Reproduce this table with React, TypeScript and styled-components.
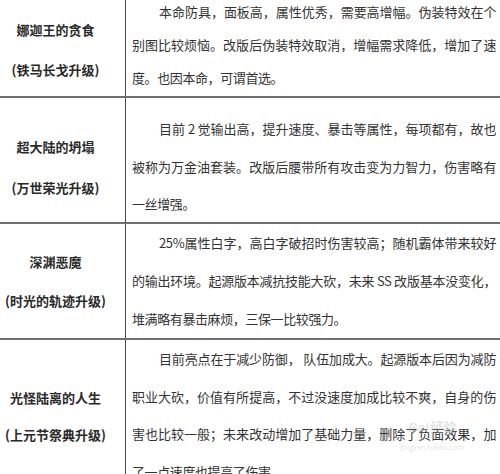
import styled, { createGlobalStyle } from 'styled-components';

const GlobalStyle = createGlobalStyle`
  html, body {
    margin: 0;
    padding: 0;
    background: #fff;
  }
  body {
    width: 500px;
    height: 474px;
    overflow: hidden;
    font-family: "Noto Sans CJK SC", "Noto Sans", sans-serif;
    color: #333;
  }
`;

type Row = {
  height: number;
  titleTop: number;
  titleGap: number;
  title: string;
  sub: string;
  bodyTop: number;
  lineHeight: number;
  lines: string[];
};

const rows: Row[] = [
  {
    height: 110,
    titleTop: 22,
    titleGap: 40,
    title: '娜迦王的贪食',
    sub: '(铁马长戈升级)',
    bodyTop: 7,
    lineHeight: 33,
    lines: [
      '本命防具，面板高，属性优秀，需要高增幅。伪装特效在个',
      '别图比较烦恼。改版后伪装特效取消，增幅需求降低，增加了速',
      '度。也因本命，可谓首选。',
    ],
  },
  {
    height: 126,
    titleTop: 28,
    titleGap: 41,
    title: '超大陆的坍塌',
    sub: '(万世荣光升级)',
    bodyTop: 12,
    lineHeight: 37.5,
    lines: [
      '目前 2 觉输出高，提升速度、暴击等属性，每项都有，故也',
      '被称为万金油套装。改版后腰带所有攻击变为力智力，伤害略有',
      '一丝增强。',
    ],
  },
  {
    height: 116,
    titleTop: 18,
    titleGap: 39,
    title: '深渊恶魔',
    sub: '(时光的轨迹升级)',
    bodyTop: 0,
    lineHeight: 38,
    lines: [
      '25%属性白字，高白字破招时伤害较高；随机霸体带来较好',
      '的输出环境。起源版本减抗技能大砍，未来 SS 改版基本没变化，',
      '堆满略有暴击麻烦，三保一比较强力。',
    ],
  },
  {
    height: 150,
    titleTop: 39,
    titleGap: 37,
    title: '光怪陆离的人生',
    sub: '(上元节祭典升级)',
    bodyTop: 0,
    lineHeight: 37.5,
    lines: [
      '目前亮点在于减少防御， 队伍加成大。起源版本后因为减防',
      '职业大砍，价值有所提高，不过没速度加成比较不爽，自身的伤',
      '害也比较一般；未来改动增加了基础力量，删除了负面效果，加',
      '了一点速度也提高了伤害。',
    ],
  },
];

function App() {
  return (
    <Page>
      <GlobalStyle />
      <Table>
        {rows.map((row) => (
          <TableRow key={row.title} $height={row.height}>
            <NameCell $top={row.titleTop}>
              <Title $lh={row.titleGap}>{row.title}</Title>
              <Title $lh={row.titleGap}>{row.sub}</Title>
            </NameCell>
            <DescCell $top={row.bodyTop}>
              {row.lines.map((line, i) => (
                <Line
                  key={i}
                  $lh={row.lineHeight}
                  $indent={i === 0}
                  $last={i === row.lines.length - 1}
                >
                  {line}
                </Line>
              ))}
            </DescCell>
          </TableRow>
        ))}
      </Table>
      <Watermark>
        <WatermarkLogo>Bai<b>经验</b></WatermarkLogo>
        <WatermarkUrl>jingyan.baidu.com</WatermarkUrl>
      </Watermark>
    </Page>
  );
}

export default App;

const Page = styled.div`
  position: relative;
  width: 500px;
  height: 474px;
  overflow: hidden;
`;

const Table = styled.div`
  display: flex;
  flex-direction: column;
  width: 540px;
  margin: -12px 0 0 -14px;
`;

const TableRow = styled.div<{ $height: number }>`
  display: grid;
  grid-template-columns: 140px 1fr;
  height: ${({ $height }) => $height}px;
  box-sizing: border-box;
  border-bottom: 2px solid #707070;
  flex-shrink: 0;
`;

const NameCell = styled.div<{ $top: number }>`
  display: flex;
  flex-direction: column;
  align-items: center;
  padding-top: ${({ $top }) => $top}px;
  border-right: 1.5px solid #4a4a4a;
`;

const Title = styled.div<{ $lh: number }>`
  font-size: 13px;
  font-weight: 700;
  color: #2a2a2a;
  line-height: ${({ $lh }) => $lh}px;
  white-space: nowrap;
`;

const DescCell = styled.div<{ $top: number }>`
  padding: ${({ $top }) => $top}px 0 0 6px;
  width: 364px;
`;

const Line = styled.div<{ $lh: number; $indent: boolean; $last: boolean }>`
  font-size: 13px;
  color: #333;
  letter-spacing: -0.4px;
  line-height: ${({ $lh }) => $lh}px;
  white-space: nowrap;
  text-align: ${({ $last }) => ($last ? 'left' : 'justify')};
  text-align-last: ${({ $last }) => ($last ? 'left' : 'justify')};
  padding-left: ${({ $indent }) => ($indent ? '27px' : '0')};
`;

const Watermark = styled.div`
  position: absolute;
  left: 400px;
  top: 420px;
  display: flex;
  flex-direction: column;
  align-items: center;
  color: rgba(190, 190, 190, 0.4);
  font-family: "Liberation Sans", sans-serif;
  pointer-events: none;
`;

const WatermarkLogo = styled.div`
  font-size: 13px;
  font-weight: 700;
  font-style: italic;
  line-height: 14px;

  b {
    font-family: "Noto Sans CJK SC", sans-serif;
    font-style: normal;
    margin-left: 2px;
  }
`;

const WatermarkUrl = styled.div`
  font-size: 8px;
  line-height: 10px;
  margin-top: 8px;
`;
